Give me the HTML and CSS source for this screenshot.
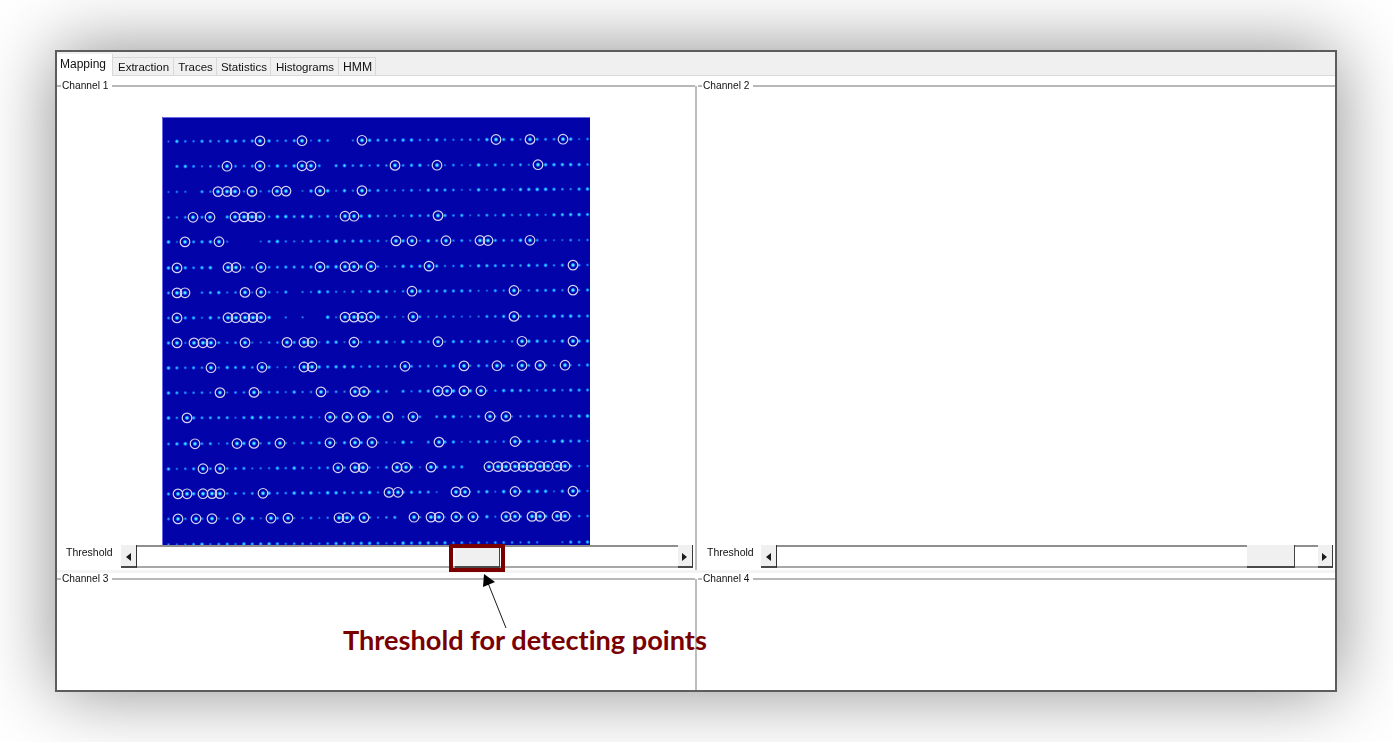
FILE: index.html
```html
<!DOCTYPE html>
<html lang="en">
<head>
    <meta charset="UTF-8">
    <title>Mapping</title>
    <link rel="stylesheet" href="styles.css">
</head>
<body>
    <div class="window">
        <div class="tabs">
            <div class="tab active">Mapping</div>
            <div class="tab">Extraction</div>
            <div class="tab tab-tight">Traces</div>
            <div class="tab tab-tight">Statistics</div>
            <div class="tab">Histograms</div>
            <div class="tab tab-caps">HMM</div>
        </div>

        <div class="panes">
            <div class="pane pane-top pane-left">
                <div class="legend"><span>Channel 1</span></div>
                <div class="plot">
                    <svg id="spots" class="spots" width="428" height="428" viewBox="162 117 428 428"></svg>
                </div>
                <div class="threshold">
                    <span class="threshold-label">Threshold</span>
                    <div class="slider slider-mid">
                        <div class="step step-left"></div>
                        <div class="track">
                            <div class="run run-before"></div>
                            <div class="thumb"></div>
                            <div class="run run-after"></div>
                        </div>
                        <div class="step step-right"></div>
                    </div>
                </div>
            </div>

            <div class="pane pane-top pane-right">
                <div class="legend"><span>Channel 2</span></div>
                <div class="plot"></div>
                <div class="threshold">
                    <span class="threshold-label">Threshold</span>
                    <div class="slider slider-high">
                        <div class="step step-left"></div>
                        <div class="track">
                            <div class="run run-before"></div>
                            <div class="thumb"></div>
                            <div class="run run-after"></div>
                        </div>
                        <div class="step step-right"></div>
                    </div>
                </div>
            </div>

            <div class="pane pane-left">
                <div class="legend"><span>Channel 3</span></div>
            </div>
            <div class="pane pane-right">
                <div class="legend"><span>Channel 4</span></div>
            </div>
        </div>

        <!-- annotation drawn on top of the screenshot -->
        <div class="callout-box"></div>
        <svg class="callout-arrow" width="40" height="62" viewBox="0 0 40 62">
            <line x1="29" y1="59" x2="11" y2="14" stroke="#1a1a1a" stroke-width="1"/>
            <polygon points="7,5 18,13 6,18" fill="#000"/>
        </svg>
        <div class="callout-text">Threshold for detecting points</div>
    </div>

    <script src="spots.js"></script>
</body>
</html>
```

FILE: styles.css
```css
html, body {
    margin: 0;
    height: 100%;
    background: #fff;
    overflow: hidden;
}

body {
    padding: 50px 0 0 55px;
    box-sizing: border-box;
    font-family: "Liberation Sans", Arial, sans-serif;
    color: #111;
}

.window {
    position: relative;
    width: 1282px;
    height: 642px;
    box-sizing: border-box;
    border: 2px solid #5c5c5c;
    background: #fff;
    box-shadow: 0 0 70px rgba(0, 0, 0, 0.45);
    display: flex;
    flex-direction: column;
}

/* Tab strip */
.tabs {
    height: 24px;
    flex: none;
    display: flex;
    align-items: flex-end;
    box-sizing: border-box;
    background: #f0f0f0;
    border-bottom: 1px solid #dadada;
    font-size: 11.5px;
    filter: blur(0.3px);
}

.tab {
    height: 19px;
    line-height: 19px;
    box-sizing: border-box;
    margin-bottom: -1px;
    padding: 0 4px 0 5px;
    border: 1px solid #d9d9d9;
    border-left: 0;
    background: #f0f0f0;
}

.tab-tight {
    padding: 0 3px 0 4px;
}

.tab-caps {
    padding: 0 3px 0 4px;
    font-size: 12.2px;
}

.tab.active {
    height: 22px;
    line-height: 21px;
    width: 56px;
    padding-left: 3px;
    background: #fff;
    border-bottom: 0;
    border-top: 0;
    font-size: 12px;
}

/* Four channel panes */
.panes {
    flex: 1;
    display: grid;
    grid-template-columns: 640px 1fr;
    grid-template-rows: 497px 1fr;
    filter: blur(0.3px);
}

/* divider starts level with the legend line */
.pane-left {
    padding-right: 2px;
    background: linear-gradient(#bdbdbd, #bdbdbd) right 0 top 6px / 2px 100% no-repeat;
}

.pane-top.pane-left {
    background-position: right 0 top 10px;
}

.pane-right {
    padding-left: 1px;
}

.pane-top {
    padding-top: 4px;
    border-bottom: 3px solid #f4f4f4;
}

.legend {
    height: 12px;
    display: flex;
    align-items: center;
    gap: 1px;
    font-size: 10.2px;
    line-height: 12px;
}

.legend::before {
    content: "";
    width: 4px;
    height: 2px;
    background: #b8b8b8;
}

.legend::after {
    content: "";
    flex: 1;
    height: 2px;
    margin-left: 3px;
    background: #b8b8b8;
}

.plot {
    height: 428px;
    margin-top: 25px;
    display: flex;
    justify-content: center;
    overflow: hidden;
}

.spots {
    display: block;
    background: #0303aa;
    filter: blur(0.4px);
}

/* Threshold row */
.threshold {
    height: 24px;
    display: grid;
    grid-template-columns: 64px 1fr;
    margin-right: 2px;
}

.pane-right .threshold {
    grid-template-columns: 63px 1fr;
}

.threshold-label {
    padding: 1px 0 0 9px;
    font-size: 10.5px;
    line-height: 12px;
}

.slider {
    display: flex;
    height: 23px;
}

.step {
    width: 15px;
    flex: none;
    box-sizing: border-box;
    position: relative;
    background: #f0f0f0;
    border-bottom: 2px solid #4a4a4a;
}

.step::before {
    content: "";
    position: absolute;
    top: 8px;
    border-style: solid;
    border-color: transparent;
    border-width: 4px 5px;
}

.step-left::before {
    left: 0;
    border-right-color: #1a1a1a;
}

.step-right {
    border-right: 1.5px solid #3a3a3a;
}

.step-right::before {
    left: 4px;
    border-left-color: #1a1a1a;
}

.track {
    flex: 1;
    display: flex;
    border-left: 1.5px solid #333;
}

.run {
    box-sizing: border-box;
    background: #fff;
    border-top: 2px solid #8e8e8e;
    border-bottom: 2px solid #a8a8a8;
}

.run-after {
    flex: 1;
}

.thumb {
    flex: none;
    box-sizing: border-box;
    background: #f0f0f0;
    border-right: 1.5px solid #444;
    border-bottom: 2px solid #4a4a4a;
}

.slider-mid .run-before {
    width: 318px;
}

.slider-mid .thumb {
    width: 45px;
}

.slider-high .run-before {
    width: 470px;
}

.slider-high .thumb {
    width: 48px;
}

/* Annotation */
.callout-box {
    position: absolute;
    left: 392px;
    top: 492px;
    width: 56px;
    height: 28px;
    box-sizing: border-box;
    border: 4px solid #7a0000;
}

.callout-arrow {
    position: absolute;
    left: 420px;
    top: 517px;
}

.callout-text {
    position: absolute;
    left: 286px;
    top: 571px;
    font-family: Lato, "Open Sans", sans-serif;
    font-weight: 700;
    font-size: 27.15px;
    font-variant-ligatures: none;
    line-height: 34px;
    color: #7a0000;
    white-space: nowrap;
}
```

FILE: spots.js
```js
// Rows of the mapping image: y at left edge, y at right edge, detected points, dark stretches
const rows = [
    [141.5, 139, [260, 302, 362, 496, 530, 563], [[333, 350]]],
    [166.5, 164.5, [227, 260, 302, 311, 395, 437, 538], [[162, 172], [320, 330]]],
    [192, 189, [218, 227, 235, 252, 277, 286, 320, 362], [[186, 200], [293, 300]]],
    [217.5, 214.5, [193, 210, 235, 244, 252, 260, 345, 354, 438], [[218, 226], [270, 274]]],
    [242, 240, [185, 219, 396, 412, 446, 480, 488, 530], [[230, 258]]],
    [268, 265, [177, 228, 236, 261, 320, 345, 354, 371, 429, 573], [[215, 222]]],
    [293, 290, [177, 185, 245, 261, 412, 514, 573], [[190, 198], [290, 300]]],
    [318, 316, [177, 228, 236, 245, 253, 261, 345, 354, 362, 371, 413, 514], [[275, 282], [292, 298], [306, 324]]],
    [343, 341, [177, 194, 203, 211, 245, 287, 304, 312, 354, 438, 522, 573], []],
    [368, 365, [211, 262, 304, 312, 405, 464, 497, 522, 540, 565], [[378, 384]]],
    [393, 390, [220, 254, 321, 355, 364, 438, 447, 464, 481], [[394, 402]]],
    [418, 416, [187, 330, 347, 363, 388, 413, 490, 506], [[394, 400], [424, 430]]],
    [444, 441, [195, 237, 254, 280, 330, 355, 372, 439, 515], [[413, 422]]],
    [469, 466, [203, 220, 338, 355, 363, 397, 406, 431, 489, 498, 506, 515, 523, 531, 540, 548, 557, 565], [[470, 480]]],
    [494, 491, [178, 187, 203, 212, 220, 263, 389, 398, 456, 465, 515, 573], [[438, 446]]],
    [519, 516, [178, 196, 212, 238, 271, 288, 339, 347, 364, 414, 431, 439, 456, 473, 506, 515, 532, 540, 557, 565], [[395, 405]]],
    [544.5, 542, [], [[545, 560]]]
];

const svg = document.getElementById('spots');
const NS = 'http://www.w3.org/2000/svg';
const PITCH = 8.38;

// Fixed sequence so the picture is the same on every load
let seed = 7;
function next() {
    seed = (seed * 16807) % 2147483647;
    return seed / 2147483647;
}

function add(name, attrs, parent) {
    const el = document.createElementNS(NS, name);
    for (const key in attrs) el.setAttribute(key, attrs[key]);
    (parent || svg).appendChild(el);
    return el;
}

function addGradient(id, stops) {
    const grad = add('radialGradient', { id: id }, defs);
    stops.forEach(s => add('stop', { offset: s[0], 'stop-color': s[1], 'stop-opacity': s[2] }, grad));
}

const defs = add('defs', {});
addGradient('dot', [[0, '#8ff4ff', 1], [0.35, '#18b8ff', 1], [0.65, '#0a5cff', 0.8], [1, '#0303aa', 0]]);
addGradient('hot', [[0, '#c8ffff', 1], [0.35, '#30d8ff', 1], [0.65, '#0a78ff', 0.85], [1, '#0303aa', 0]]);

rows.forEach(row => {
    const [y0, y1, rings, gaps] = row;
    const yAt = x => y0 + (y1 - y0) * (x - 162) / 428;

    for (let x = 168.5; x < 592; x += PITCH) {
        const jitter = next();
        if (rings.some(r => Math.abs(r - x) < 4.2)) continue;
        if (gaps.some(g => x >= g[0] && x <= g[1])) continue;
        add('circle', {
            cx: x.toFixed(1),
            cy: yAt(x).toFixed(1),
            r: (1.9 + jitter * 0.9).toFixed(1),
            fill: 'url(#dot)',
            opacity: (0.45 + jitter * 0.55).toFixed(2)
        });
    }

    rings.forEach(x => {
        add('circle', { cx: x, cy: yAt(x).toFixed(1), r: 2.8, fill: 'url(#hot)' });
        add('circle', { cx: x, cy: yAt(x).toFixed(1), r: 4.8, fill: 'none', stroke: '#d4d4f0', 'stroke-width': 1.2 });
    });
});

// Lighter edge along the top and left of the image
add('path', { d: 'M162.5 545V117.5H590', fill: 'none', stroke: '#6a6ae4', 'stroke-width': 1 });
```
